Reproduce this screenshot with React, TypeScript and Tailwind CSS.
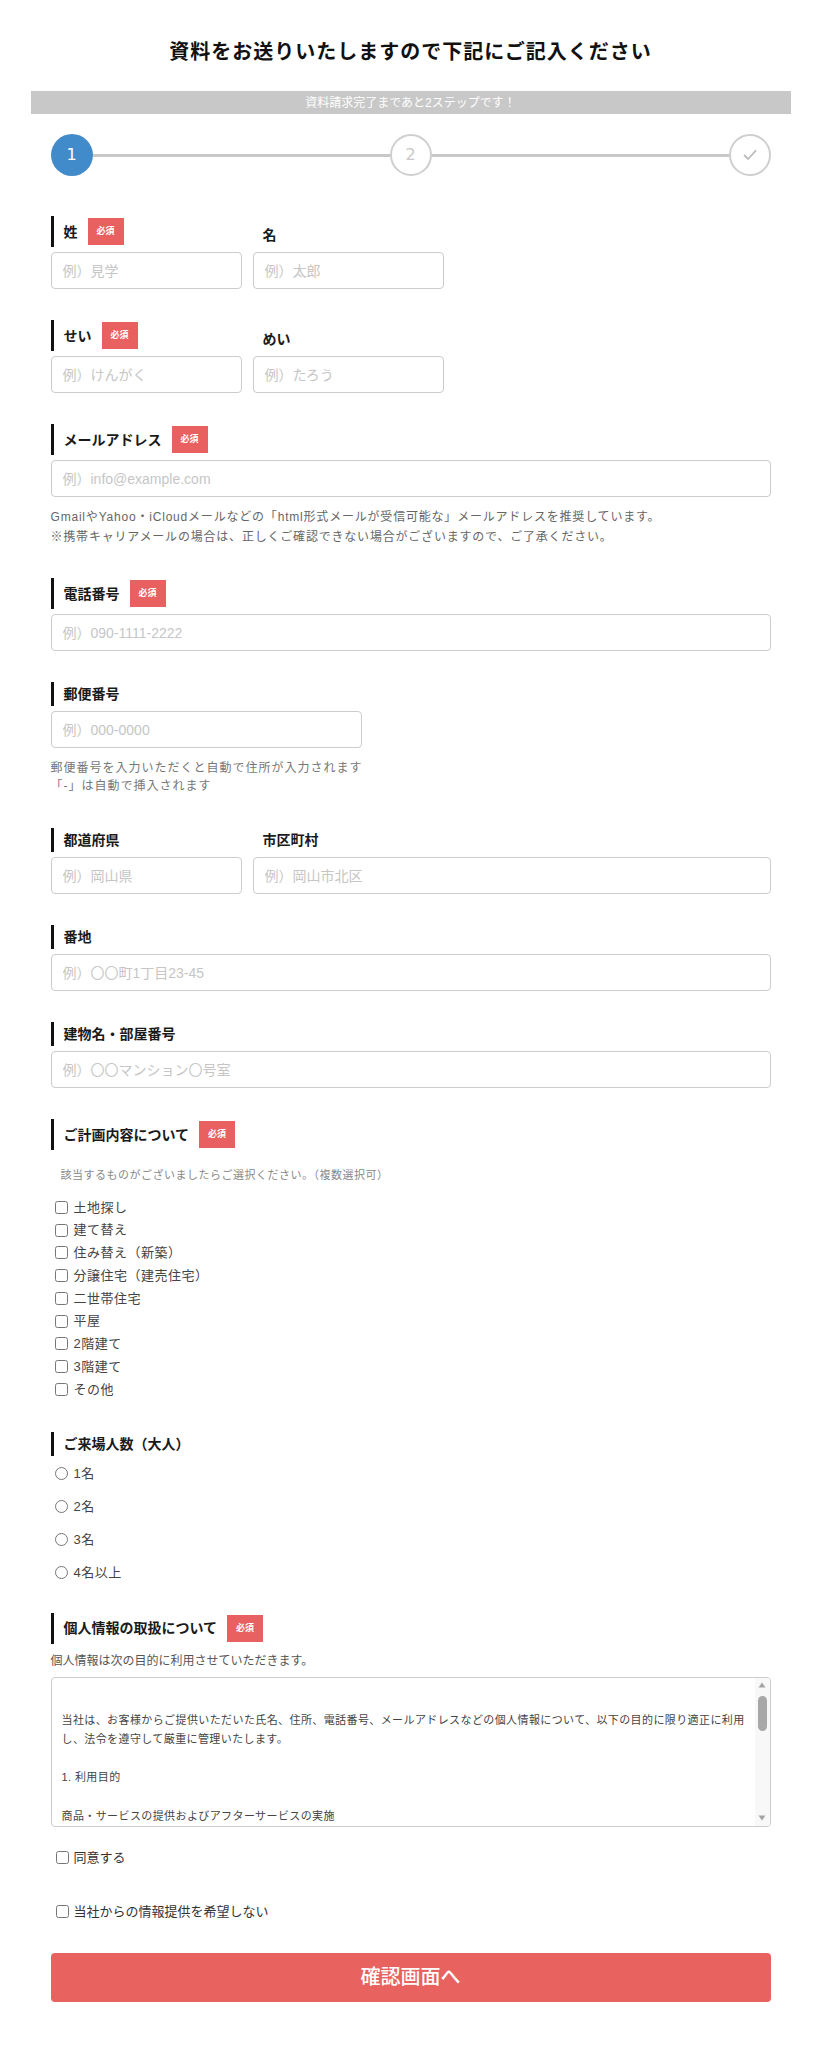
import React from "react";

function Badge() {
  return (
    <span className="ml-[10px] inline-flex h-[27px] w-[36px] items-center justify-center bg-[#e8605f] text-[9px] font-bold text-white">
      必須
    </span>
  );
}

function Label({ children, required }: { children: React.ReactNode; required?: boolean }) {
  return (
    <div className="flex items-center border-l-[3px] border-[#111] py-[2px] pl-[10px]">
      <span className="text-[14px] font-bold leading-[20px] text-[#1a1a1a]">{children}</span>
      {required && <Badge />}
    </div>
  );
}

function SubLabel({ children }: { children: React.ReactNode }) {
  return (
    <div className="flex h-[31px] items-center pl-[10px] pt-[6px]">
      <span className="text-[14px] font-bold leading-[20px] text-[#1a1a1a]">{children}</span>
    </div>
  );
}

function TextInput({ placeholder, className }: { placeholder: string; className?: string }) {
  return (
    <input
      type="text"
      placeholder={placeholder}
      className={
        "block h-[37px] rounded-[4px] border border-[#cccccc] bg-white px-[11px] text-[14px] text-[#333] outline-none placeholder:text-[#c6c6c6] " +
        (className ?? "w-full")
      }
    />
  );
}

const plans = [
  "土地探し",
  "建て替え",
  "住み替え（新築）",
  "分譲住宅（建売住宅）",
  "二世帯住宅",
  "平屋",
  "2階建て",
  "3階建て",
  "その他",
];

const people = ["1名", "2名", "3名", "4名以上"];

const privacy = `当社は、お客様からご提供いただいた氏名、住所、電話番号、メールアドレスなどの個人情報について、以下の目的に限り適正に利用し、法令を遵守して厳重に管理いたします。

1. 利用目的

商品・サービスの提供およびアフターサービスの実施`;

export default function App() {
  return (
    <div className="min-h-[2046px] bg-white font-['Liberation_Sans','Noto_Sans_CJK_JP',sans-serif] text-[#333]">
      <div className="mx-auto w-[760px] pb-[44px] pt-[37px]">
        <h1 className="text-center text-[20px] font-bold leading-[30px] tracking-[1px] text-[#111]">
          資料をお送りいたしますので下記にご記入ください
        </h1>

        <div className="mt-[24px] flex h-[23px] items-center justify-center bg-[#c8c8c8] text-[12px] text-white">
          資料請求完了まであと2ステップです！
        </div>

        <div className="px-[20px]">
          {/* steps */}
          <div className="mt-[20px] flex items-center">
            <div className="flex h-[42px] w-[42px] shrink-0 items-center justify-center rounded-full bg-[#428bca] font-['DejaVu_Sans',sans-serif] text-[16px] text-white">
              1
            </div>
            <div className="h-[3px] flex-1 bg-[#c8c8c8]" />
            <div className="flex h-[42px] w-[42px] shrink-0 items-center justify-center rounded-full border-2 border-[#cfcfcf] bg-white font-['DejaVu_Sans',sans-serif] text-[16px] text-[#c8c8c8]">
              2
            </div>
            <div className="h-[3px] flex-1 bg-[#c8c8c8]" />
            <div className="flex h-[42px] w-[42px] shrink-0 items-center justify-center rounded-full border-2 border-[#cfcfcf] bg-white">
              <svg width="16" height="16" viewBox="0 0 16 16" fill="none">
                <polyline points="2.5,8.5 6.2,12 13.5,3.8" stroke="#bdbdbd" strokeWidth="1.8" strokeLinecap="round" strokeLinejoin="round" />
              </svg>
            </div>
          </div>

          <form className="mt-[40px]" onSubmit={(e) => e.preventDefault()}>
            {/* 姓 名 */}
            <div className="mb-[31px] flex gap-[11px]">
              <div className="w-[191px]">
                <Label required>姓</Label>
                <div className="mt-[5px]">
                  <TextInput placeholder="例）見学" />
                </div>
              </div>
              <div className="w-[191px]">
                <SubLabel>名</SubLabel>
                <div className="mt-[5px]">
                  <TextInput placeholder="例）太郎" />
                </div>
              </div>
            </div>

            {/* せい めい */}
            <div className="mb-[31px] flex gap-[11px]">
              <div className="w-[191px]">
                <Label required>せい</Label>
                <div className="mt-[5px]">
                  <TextInput placeholder="例）けんがく" />
                </div>
              </div>
              <div className="w-[191px]">
                <SubLabel>めい</SubLabel>
                <div className="mt-[5px]">
                  <TextInput placeholder="例）たろう" />
                </div>
              </div>
            </div>

            {/* email */}
            <div className="mb-[31px]">
              <Label required>メールアドレス</Label>
              <div className="mt-[5px]">
                <TextInput placeholder="例）info@example.com" />
              </div>
              <p className="mt-[10px] text-[12px] leading-[20px] tracking-[0.8px] text-[#666]">
                GmailやYahoo・iCloudメールなどの「html形式メールが受信可能な」メールアドレスを推奨しています。
                <br />
                ※携帯キャリアメールの場合は、正しくご確認できない場合がございますので、ご了承ください。
              </p>
            </div>

            {/* tel */}
            <div className="mb-[31px]">
              <Label required>電話番号</Label>
              <div className="mt-[5px]">
                <TextInput placeholder="例）090-1111-2222" />
              </div>
            </div>

            {/* zip */}
            <div className="mb-[33px]">
              <Label>郵便番号</Label>
              <div className="mt-[5px]">
                <TextInput placeholder="例）000-0000" className="w-[311px]" />
              </div>
              <p className="mt-[11px] text-[12px] leading-[18px] tracking-[1px] text-[#777]">
                郵便番号を入力いただくと自動で住所が入力されます
                <br />
                「-」は自動で挿入されます
              </p>
            </div>

            {/* pref city */}
            <div className="mb-[31px] flex gap-[11px]">
              <div className="w-[191px]">
                <Label>都道府県</Label>
                <div className="mt-[5px]">
                  <TextInput placeholder="例）岡山県" />
                </div>
              </div>
              <div className="flex-1">
                <div className="flex h-[24px] items-center pl-[10px]">
                  <span className="text-[14px] font-bold leading-[20px] text-[#1a1a1a]">市区町村</span>
                </div>
                <div className="mt-[5px]">
                  <TextInput placeholder="例）岡山市北区" />
                </div>
              </div>
            </div>

            {/* address */}
            <div className="mb-[31px]">
              <Label>番地</Label>
              <div className="mt-[5px]">
                <TextInput placeholder="例）〇〇町1丁目23-45" />
              </div>
            </div>

            {/* building */}
            <div className="mb-[31px]">
              <Label>建物名・部屋番号</Label>
              <div className="mt-[5px]">
                <TextInput placeholder="例）〇〇マンション〇号室" />
              </div>
            </div>

            {/* plans */}
            <div className="mb-[31px]">
              <Label required>ご計画内容について</Label>
              <p className="mt-[16px] pl-[10px] text-[11px] leading-[18px] tracking-[0.5px] text-[#888]">
                該当するものがございましたらご選択ください。（複数選択可）
              </p>
              <div className="mt-[12px] flex flex-col">
                {plans.map((p) => (
                  <label key={p} className="flex h-[22.75px] items-center text-[13px] tracking-[0.5px] text-[#444]">
                    <input type="checkbox" className="m-0 ml-[4px] mr-[3px] h-[13px] w-[13px]" />
                    <span className="ml-[3px]">{p}</span>
                  </label>
                ))}
              </div>
            </div>

            {/* people */}
            <div className="mb-[29px]">
              <Label>ご来場人数（大人）</Label>
              <div className="mt-[6px] flex flex-col gap-[10px]">
                {people.map((p) => (
                  <label key={p} className="flex h-[23px] items-center text-[13px] tracking-[0.5px] text-[#444]">
                    <input type="radio" name="people" className="m-0 ml-[4px] mr-[3px] h-[13px] w-[13px]" />
                    <span className="ml-[3px]">{p}</span>
                  </label>
                ))}
              </div>
            </div>

            {/* privacy */}
            <div>
              <Label required>個人情報の取扱について</Label>
              <p className="mt-[8px] text-[12px] leading-[18px] text-[#555]">
                個人情報は次の目的に利用させていただきます。
              </p>
              <div className="mt-[7px] flex h-[150px] overflow-hidden rounded-[4px] border border-[#cccccc] bg-white">
                <div className="flex-1 whitespace-pre-wrap pl-[10px] pr-[6px] pt-[33px] text-[11px] leading-[19.2px] tracking-[0.4px] text-[#444]">
                  {privacy}
                </div>
                <div className="flex w-[15px] shrink-0 flex-col items-center bg-[#f8f8f8]">
                  <div className="flex h-[15px] w-full items-center justify-center">
                    <svg width="8" height="6" viewBox="0 0 8 6">
                      <polygon points="4,0.5 7.5,5.5 0.5,5.5" fill="#a3a3a3" />
                    </svg>
                  </div>
                  <div className="mt-[3px] h-[35px] w-[9px] rounded-full bg-[#a8a8a8]" />
                  <div className="flex-1" />
                  <div className="flex h-[15px] w-full items-center justify-center">
                    <svg width="8" height="6" viewBox="0 0 8 6">
                      <polygon points="0.5,0.5 7.5,0.5 4,5.5" fill="#a3a3a3" />
                    </svg>
                  </div>
                </div>
              </div>

              <label className="mt-[19px] flex h-[23px] items-center text-[13px] text-[#333]">
                <input type="checkbox" className="m-0 ml-[5px] mr-[3px] h-[13px] w-[13px]" />
                <span className="ml-[2px]">同意する</span>
              </label>

              <label className="mt-[31px] flex h-[23px] items-center text-[13px] text-[#333]">
                <input type="checkbox" className="m-0 ml-[5px] mr-[3px] h-[13px] w-[13px]" />
                <span className="ml-[2px]">当社からの情報提供を希望しない</span>
              </label>
            </div>

            <button
              type="submit"
              className="mt-[30px] flex h-[49px] w-full items-center justify-center rounded-[4px] bg-[#e8625f] text-[20px] font-medium text-white"
            >
              確認画面へ
            </button>
          </form>
        </div>
      </div>
    </div>
  );
}
